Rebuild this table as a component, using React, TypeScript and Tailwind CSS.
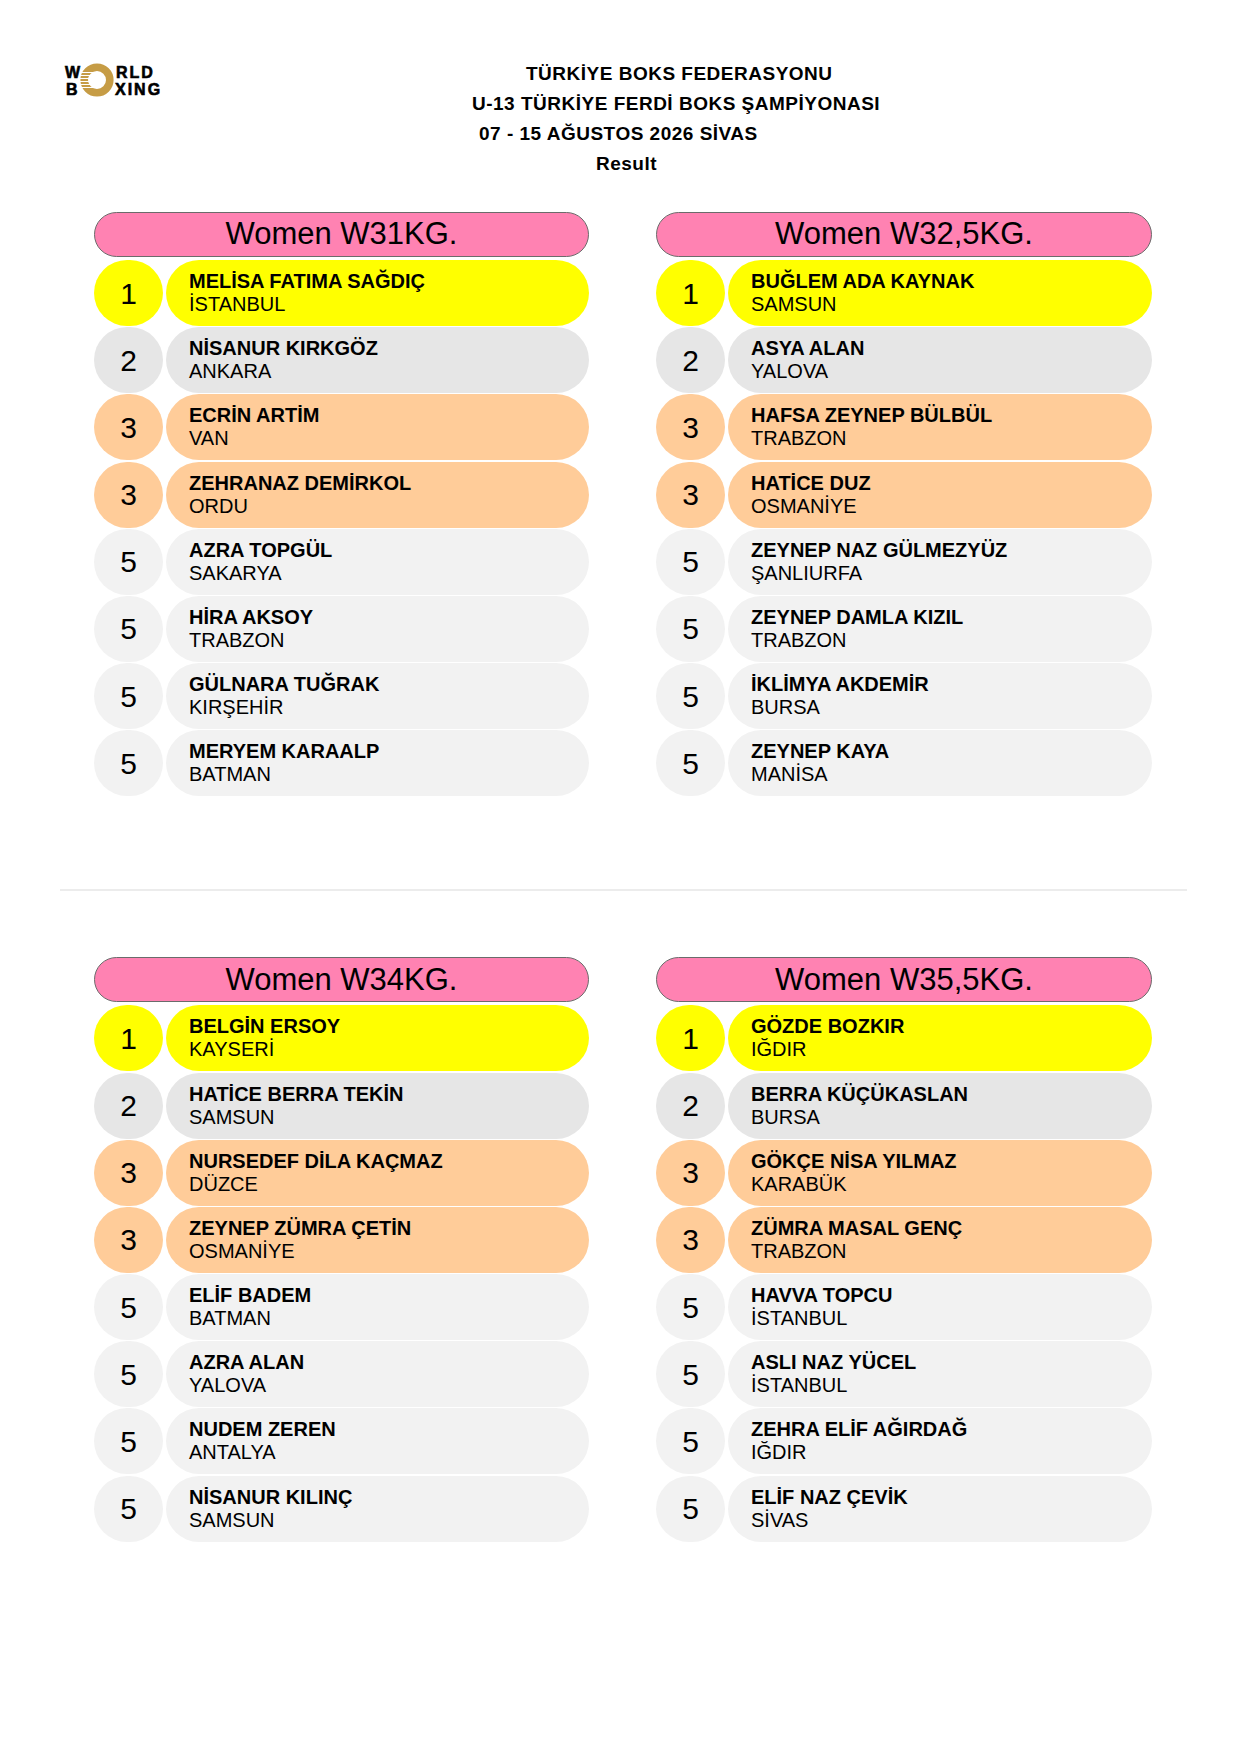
type Athlete = { rank: number; name: string; city: string };
type Category = { title: string; rows: Athlete[] };

const rowColors = [
  "bg-[#ffff00]",
  "bg-[#e6e6e6]",
  "bg-[#ffcc99]",
  "bg-[#ffcc99]",
  "bg-[#f2f2f2]",
  "bg-[#f2f2f2]",
  "bg-[#f2f2f2]",
  "bg-[#f2f2f2]",
];

const top: Category[] = [
  {
    title: "Women W31KG.",
    rows: [
      { rank: 1, name: "MELİSA FATIMA SAĞDIÇ", city: "İSTANBUL" },
      { rank: 2, name: "NİSANUR KIRKGÖZ", city: "ANKARA" },
      { rank: 3, name: "ECRİN ARTİM", city: "VAN" },
      { rank: 3, name: "ZEHRANAZ DEMİRKOL", city: "ORDU" },
      { rank: 5, name: "AZRA TOPGÜL", city: "SAKARYA" },
      { rank: 5, name: "HİRA AKSOY", city: "TRABZON" },
      { rank: 5, name: "GÜLNARA TUĞRAK", city: "KIRŞEHİR" },
      { rank: 5, name: "MERYEM KARAALP", city: "BATMAN" },
    ],
  },
  {
    title: "Women W32,5KG.",
    rows: [
      { rank: 1, name: "BUĞLEM ADA KAYNAK", city: "SAMSUN" },
      { rank: 2, name: "ASYA ALAN", city: "YALOVA" },
      { rank: 3, name: "HAFSA ZEYNEP BÜLBÜL", city: "TRABZON" },
      { rank: 3, name: "HATİCE DUZ", city: "OSMANİYE" },
      { rank: 5, name: "ZEYNEP NAZ GÜLMEZYÜZ", city: "ŞANLIURFA" },
      { rank: 5, name: "ZEYNEP DAMLA KIZIL", city: "TRABZON" },
      { rank: 5, name: "İKLİMYA AKDEMİR", city: "BURSA" },
      { rank: 5, name: "ZEYNEP KAYA", city: "MANİSA" },
    ],
  },
];

const bottom: Category[] = [
  {
    title: "Women W34KG.",
    rows: [
      { rank: 1, name: "BELGİN ERSOY", city: "KAYSERİ" },
      { rank: 2, name: "HATİCE BERRA TEKİN", city: "SAMSUN" },
      { rank: 3, name: "NURSEDEF DİLA KAÇMAZ", city: "DÜZCE" },
      { rank: 3, name: "ZEYNEP ZÜMRA ÇETİN", city: "OSMANİYE" },
      { rank: 5, name: "ELİF BADEM", city: "BATMAN" },
      { rank: 5, name: "AZRA ALAN", city: "YALOVA" },
      { rank: 5, name: "NUDEM ZEREN", city: "ANTALYA" },
      { rank: 5, name: "NİSANUR KILINÇ", city: "SAMSUN" },
    ],
  },
  {
    title: "Women W35,5KG.",
    rows: [
      { rank: 1, name: "GÖZDE BOZKIR", city: "IĞDIR" },
      { rank: 2, name: "BERRA KÜÇÜKASLAN", city: "BURSA" },
      { rank: 3, name: "GÖKÇE NİSA YILMAZ", city: "KARABÜK" },
      { rank: 3, name: "ZÜMRA MASAL GENÇ", city: "TRABZON" },
      { rank: 5, name: "HAVVA TOPCU", city: "İSTANBUL" },
      { rank: 5, name: "ASLI NAZ YÜCEL", city: "İSTANBUL" },
      { rank: 5, name: "ZEHRA ELİF AĞIRDAĞ", city: "IĞDIR" },
      { rank: 5, name: "ELİF NAZ ÇEVİK", city: "SİVAS" },
    ],
  },
];

function Logo() {
  return (
    <div className="relative w-[104px] h-[34px] font-['Liberation_Sans',sans-serif] font-black text-[16px] leading-none text-black [-webkit-text-stroke:0.6px_black]">
      <svg className="absolute left-[15px] top-[-1px]" width="34" height="34" viewBox="0 0 34 34">
        <defs>
          <clipPath id="lefthalf">
            <rect x="0" y="0" width="16" height="34" />
          </clipPath>
        </defs>
        <circle cx="17" cy="17" r="12.8" fill="none" stroke="#c69c45" strokeWidth="7.6" />
        <g clipPath="url(#lefthalf)" stroke="#ffffff" strokeWidth="1">
          <line x1="0" y1="9.5" x2="16" y2="9.5" />
          <line x1="0" y1="12.5" x2="16" y2="12.5" />
          <line x1="0" y1="15.5" x2="16" y2="15.5" />
          <line x1="0" y1="18.5" x2="16" y2="18.5" />
          <line x1="0" y1="21.5" x2="16" y2="21.5" />
          <line x1="0" y1="24.5" x2="16" y2="24.5" />
        </g>
      </svg>
      <span className="absolute left-[0px] top-[1px] tracking-[1px]">W</span>
      <span className="absolute left-[51px] top-[1px] tracking-[2px]">RLD</span>
      <span className="absolute left-[1px] top-[18px]">B</span>
      <span className="absolute left-[50px] top-[18px] tracking-[2px]">XING</span>
    </div>
  );
}

function Card({ category }: { category: Category }) {
  return (
    <div className="flex flex-col">
      <div className="h-[45px] rounded-full border-[1.5px] border-[#6b6b6b] bg-[#ff82b2] flex items-center justify-center text-[31px] text-black">
        {category.title}
      </div>
      <div className="mt-[3px] flex flex-col gap-[1.2px]">
        {category.rows.map((row, i) => (
          <div key={i} className="flex h-[66px] gap-[3px]">
            <div
              className={`${rowColors[i]} w-[69px] shrink-0 rounded-full flex items-center justify-center text-[30px] text-black`}
            >
              {row.rank}
            </div>
            <div
              className={`${rowColors[i]} flex-1 rounded-full flex flex-col justify-center pl-[23px] text-[20px] leading-[23px] text-black`}
            >
              <span className="font-bold">{row.name}</span>
              <span>{row.city}</span>
            </div>
          </div>
        ))}
      </div>
    </div>
  );
}

function Section({ cats }: { cats: Category[] }) {
  return (
    <div className="ml-[94px] grid grid-cols-[495px_496px] gap-x-[67px]">
      {cats.map((c) => (
        <Card key={c.title} category={c} />
      ))}
    </div>
  );
}

export default function App() {
  return (
    <div className="w-[1241px] min-h-[1755px] bg-white font-['Liberation_Sans',Arial,sans-serif] text-black">
      <div className="flex pt-[59px]">
        <div className="ml-[65px] mt-[5px]">
          <Logo />
        </div>
        <div className="ml-[303px] flex flex-col items-start text-[19px] tracking-[0.5px] font-bold leading-[30px]">
          <div className="ml-[54px]">TÜRKİYE BOKS FEDERASYONU</div>
          <div>U-13 TÜRKİYE FERDİ BOKS ŞAMPİYONASI</div>
          <div className="ml-[7px]">07 - 15 AĞUSTOS 2026 SİVAS</div>
          <div className="ml-[124px]">Result</div>
        </div>
      </div>
      <div className="mt-[33px]">
        <Section cats={top} />
      </div>
      <div className="mt-[93px] ml-[60px] w-[1127px] h-[2px] bg-[#ececec]" />
      <div className="mt-[66px]">
        <Section cats={bottom} />
      </div>
    </div>
  );
}
